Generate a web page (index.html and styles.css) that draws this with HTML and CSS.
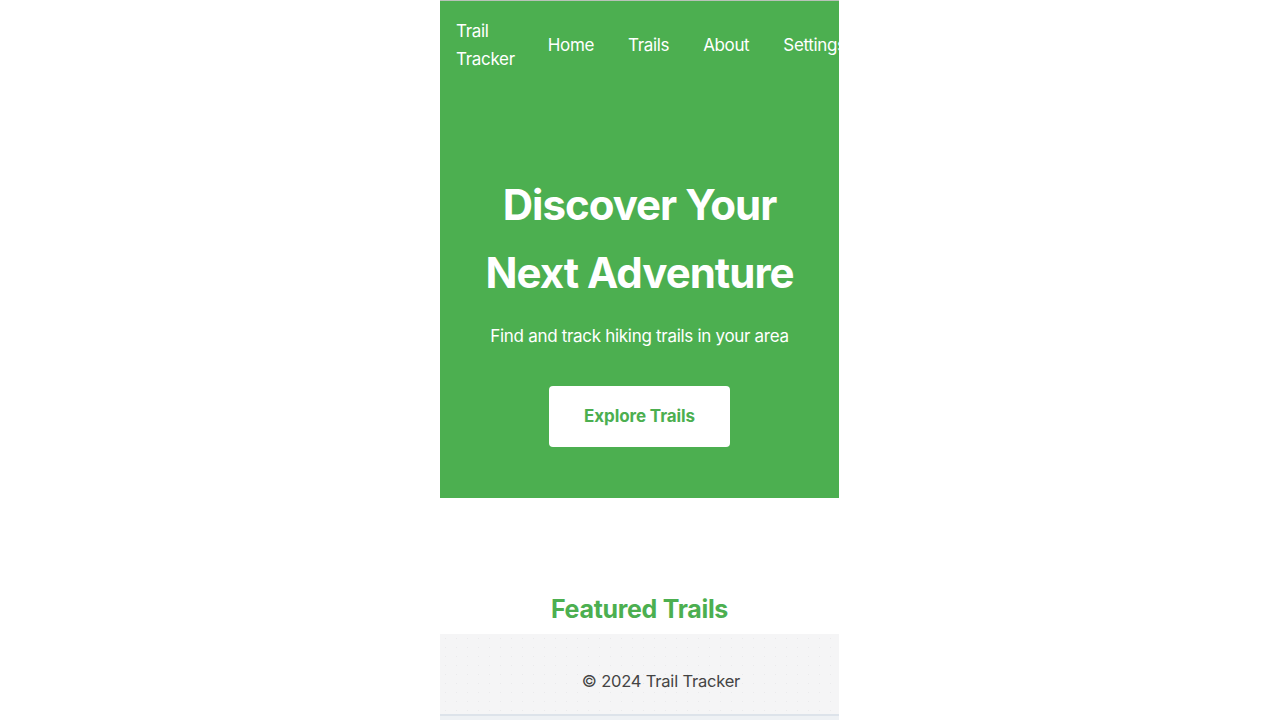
FILE: index.html
```html
<!DOCTYPE html>
<html lang="en">
<head>
<meta charset="utf-8">
<title>Trail Tracker</title>
<link rel="stylesheet" href="styles.css">
</head>
<body>
<div class="page">
  <header class="site-header">
    <div class="logo">Trail Tracker</div>
    <nav class="nav">
      <a href="#">Home</a>
      <a href="#">Trails</a>
      <a href="#">About</a>
      <a href="#">Settings</a>
    </nav>
  </header>
  <section class="hero">
    <h1 class="hero-title">Discover Your Next Adventure</h1>
    <p class="hero-sub">Find and track hiking trails in your area</p>
    <a class="hero-btn" href="#">Explore Trails</a>
  </section>
  <main class="featured">
    <h2 class="featured-title">Featured Trails</h2>
  </main>
  <footer class="site-footer">
    <p class="footer-text">© 2024 Trail Tracker</p>
  </footer>
  <div class="below"></div>
</div>
</body>
</html>
```
FILE: styles.css
```css
* { box-sizing: border-box; }
html, body { margin: 0; padding: 0; background: #ffffff; }
body {
  font-family: Inter, "Noto Sans", "Liberation Sans", sans-serif;
  height: 720px;
  overflow: hidden;
}
.page {
  width: 399px;
  margin: 0 0 0 440px;
  overflow: hidden;
  border-top: 1px solid #b9c2b9;
}
.site-header {
  background: #4caf50;
  display: flex;
  align-items: center;
  padding: 16px;
  gap: 33px;
  color: #fff;
  white-space: nowrap;
}
.logo {
  font-size: 17px;
  letter-spacing: -0.3px;
  line-height: 28px;
  width: min-content;
  white-space: normal;
  flex-shrink: 0;
}
.nav { display: flex; gap: 34px; flex-shrink: 0; }
.nav a {
  color: #fff;
  text-decoration: none;
  font-size: 17px;
  letter-spacing: -0.35px;
  line-height: 28px;
}
.hero {
  background: #4caf50;
  color: #fff;
  text-align: center;
  padding: 82px 20px 51px;
}
.hero-title {
  margin: 0 auto;
  font-size: 42px;
  line-height: 68px;
  font-weight: 700;
  letter-spacing: -1px;
  max-width: 340px;
}
.hero-sub {
  margin: 16px 0 36px;
  font-size: 17px;
  letter-spacing: -0.3px;
  line-height: 27px;
}
.hero-btn {
  display: inline-block;
  background: #fff;
  color: #4caf50;
  text-decoration: none;
  font-weight: 700;
  font-size: 17px;
  letter-spacing: -0.1px;
  line-height: 27px;
  padding: 17px 35px;
  border-radius: 4px;
}
.featured {
  background: #fff;
  text-align: center;
  padding: 90px 0 4px;
}
.featured-title {
  margin: 0;
  color: #4caf50;
  font-size: 25px;
  letter-spacing: -0.3px;
  line-height: 42px;
  font-weight: 700;
}
.site-footer {
  background-color: #f5f5f6;
  background-image: radial-gradient(circle, #eaeaec 0.6px, transparent 1px);
  background-size: 11px 9px;
  height: 80px;
  padding: 34px 0 0 43px;
  text-align: center;
}
.footer-text {
  margin: 0;
  color: #444;
  font-size: 16.5px;
  letter-spacing: -0.2px;
  line-height: 26px;
}
.below {
  border-top: 2px solid #dde3ea;
  background: #eef1f4;
  height: 10px;
}
```
